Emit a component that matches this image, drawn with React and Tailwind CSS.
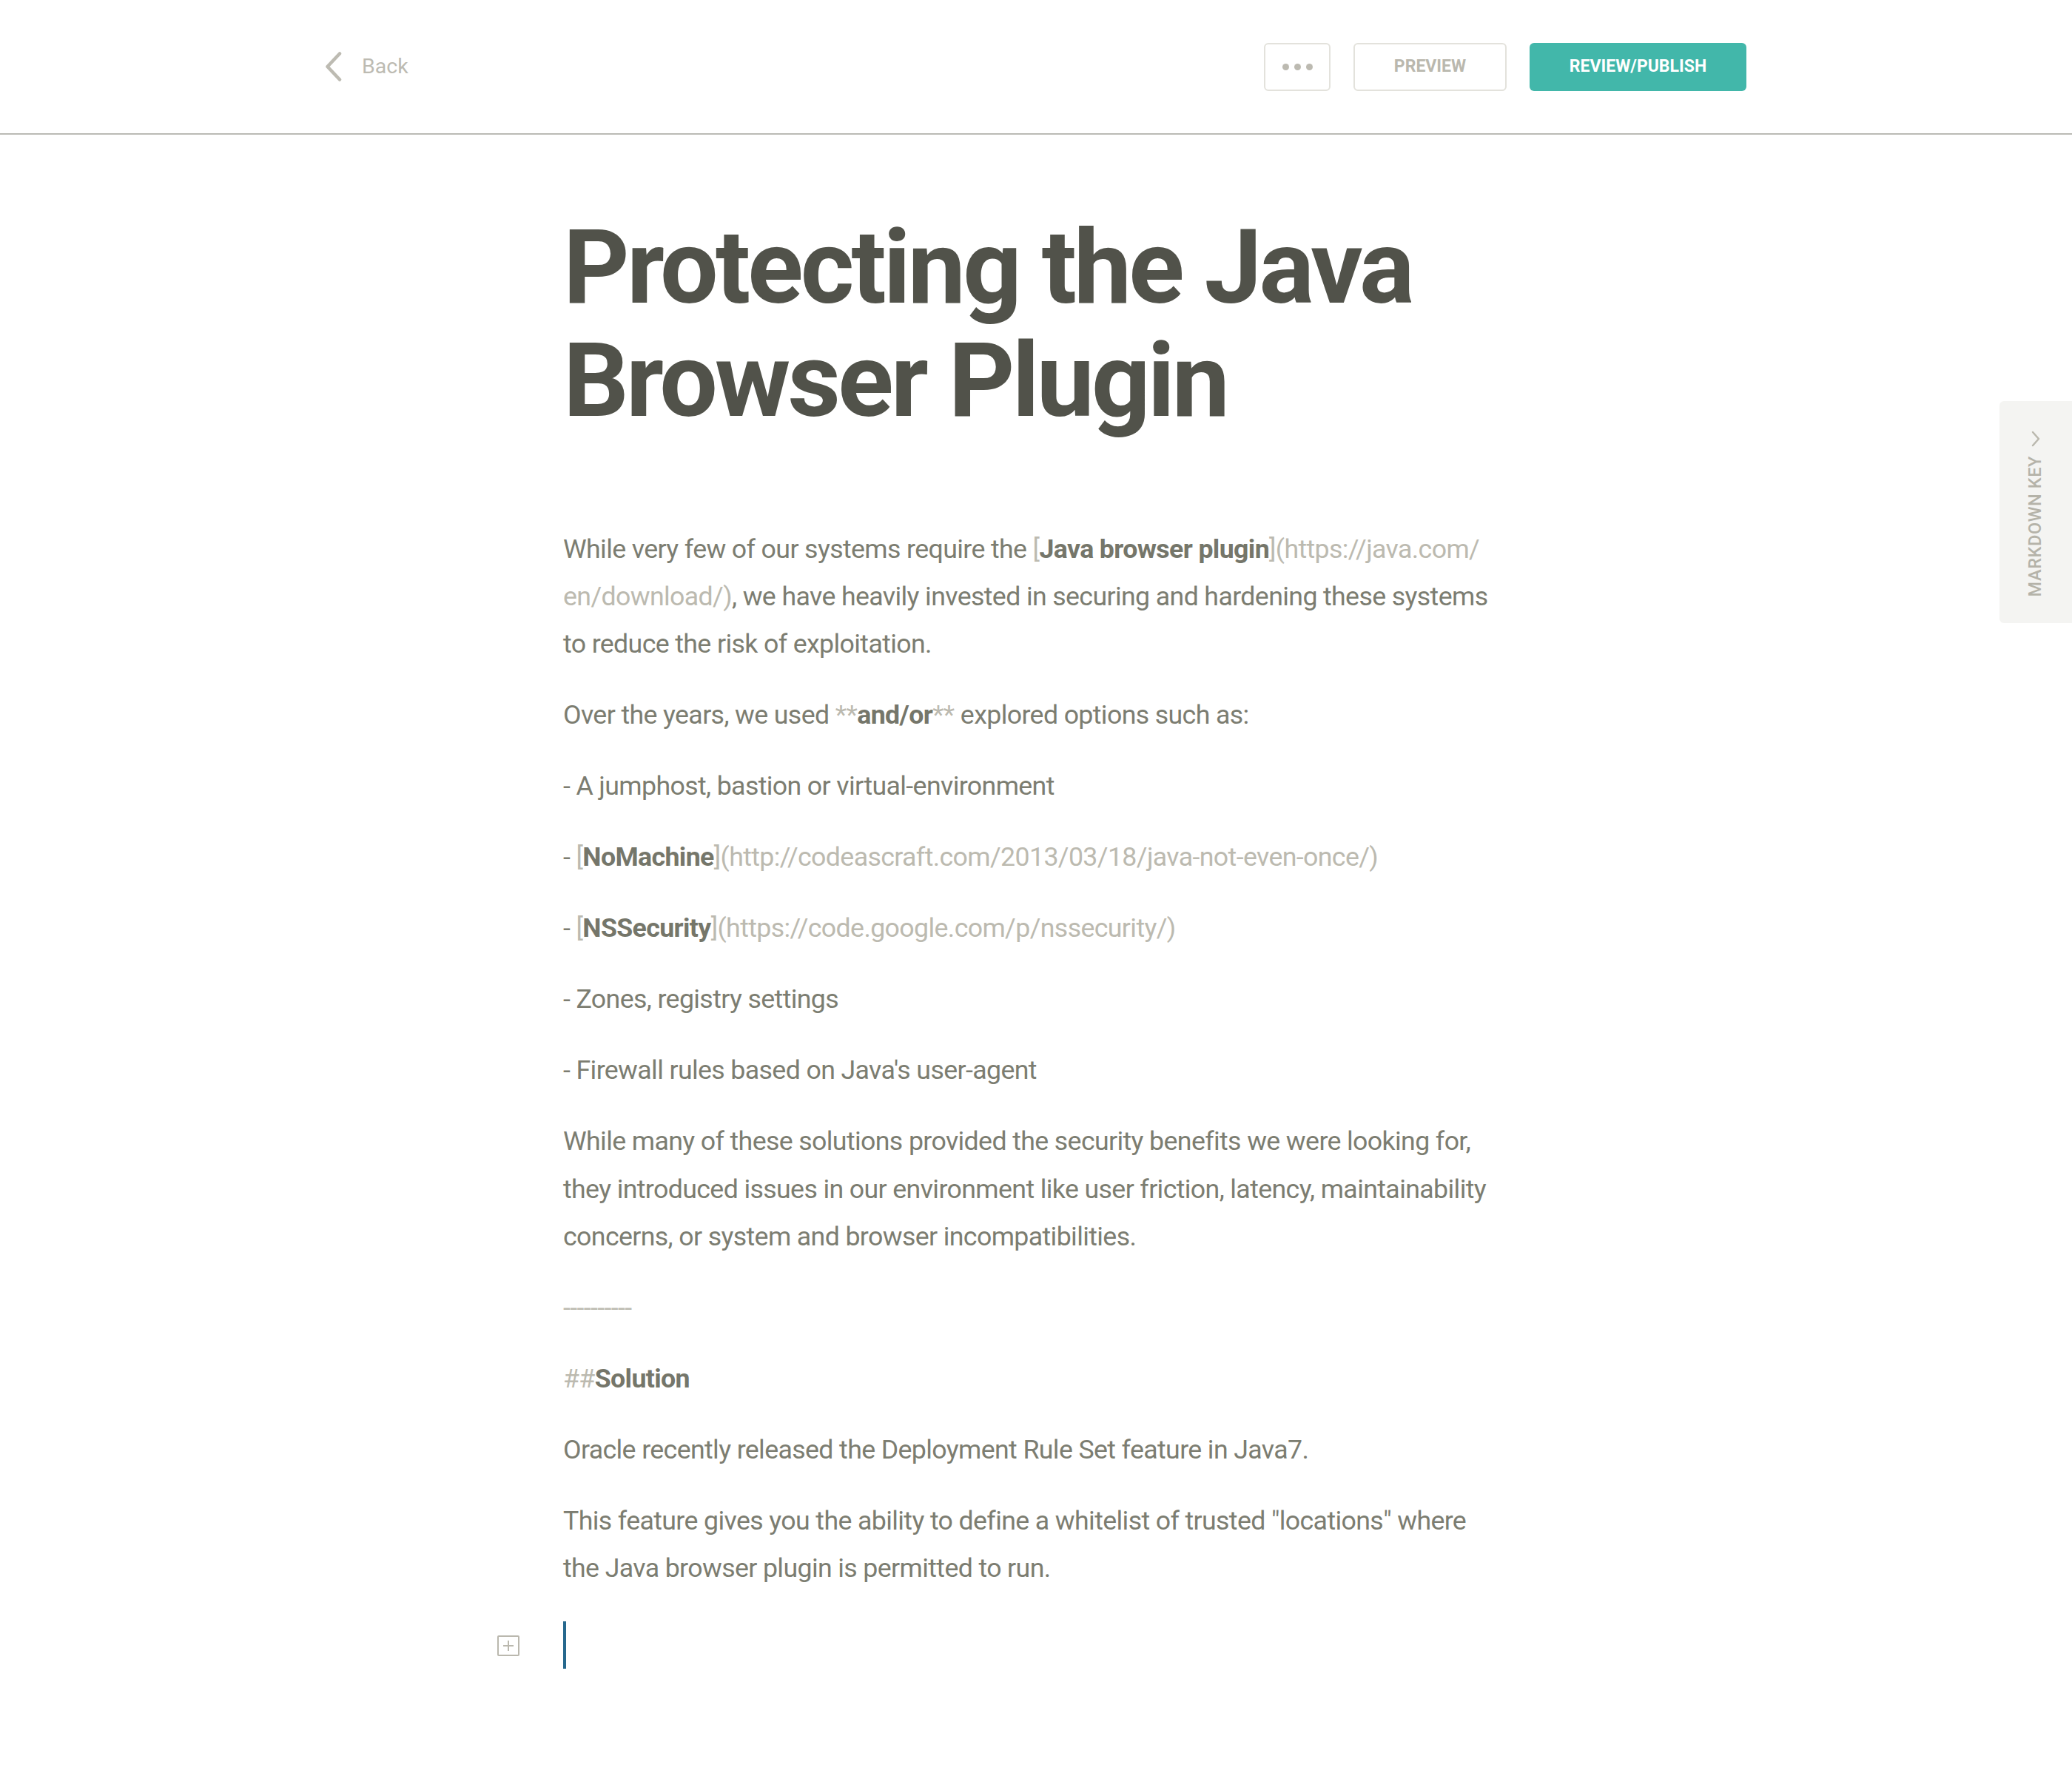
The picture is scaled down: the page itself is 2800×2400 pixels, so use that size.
function Md({ children }) {
  return <span className="text-[#bcbab0]">{children}</span>;
}

function B({ children }) {
  return <strong className="font-bold text-[#75766a]">{children}</strong>;
}

function Header() {
  return (
    <header className="h-[182px] border-b-2 border-[#bbbbb5]">
      <div className="mx-auto flex h-full w-[1920px] items-center justify-between">
        <button className="flex items-center gap-[27px] text-[#bdbbb2]">
          <svg width="22" height="40" viewBox="0 0 22 40" fill="none">
            <path
              d="M19 2.5 L2.5 20 L19 37.5"
              stroke="#bdbbb2"
              strokeWidth="4.5"
              strokeLinecap="round"
              strokeLinejoin="round"
            />
          </svg>
          <span className="text-[28.5px] leading-none">Back</span>
        </button>

        <div className="flex items-center gap-[31px] text-[23px] font-bold">
          <button className="flex h-[65px] w-[90px] items-center justify-center gap-[7px] rounded-[6px] border-2 border-[#e3e2dc]">
            <span className="h-[9px] w-[9px] rounded-full bg-[#bcbab1]" />
            <span className="h-[9px] w-[9px] rounded-full bg-[#bcbab1]" />
            <span className="h-[9px] w-[9px] rounded-full bg-[#bcbab1]" />
          </button>
          <button className="h-[65px] w-[207px] rounded-[6px] border-2 border-[#e3e2dc] text-[#bab8ae]">
            PREVIEW
          </button>
          <button className="h-[65px] w-[293px] rounded-[6px] bg-[#42b7aa] text-white">
            REVIEW/PUBLISH
          </button>
        </div>
      </div>
    </header>
  );
}

function MarkdownKey() {
  return (
    <div className="absolute right-0 top-[542px] flex h-[300px] w-[98px] flex-col items-center rounded-l-[6px] bg-[#f4f4f2] pt-[40px]">
      <svg width="14" height="22" viewBox="0 0 14 22" fill="none">
        <path
          d="M3 2 L11 11 L3 20"
          stroke="#bab8ae"
          strokeWidth="2.5"
          strokeLinecap="round"
          strokeLinejoin="round"
        />
      </svg>
      <span className="mt-[12px] rotate-180 text-[23.5px] font-medium leading-none tracking-[0.6px] text-[#b5b3a9] [writing-mode:vertical-rl]">
        MARKDOWN KEY
      </span>
    </div>
  );
}

export default function App() {
  return (
    <div className="relative min-h-[2400px] bg-white font-[Roboto,sans-serif]">
      <Header />
      <MarkdownKey />

      <main className="mx-auto w-[1278px] pt-[103px] pb-[120px]">
        <h1 className="mb-[118px] text-[139.3px] font-bold leading-[153.4px] tracking-[-3.8px] text-[#51524a]">
          Protecting the Java Browser Plugin
        </h1>

        <div className="pr-[16px] text-[35.7px] leading-[64.3px] tracking-[-0.62px] text-[#7c7d71]">
          <p className="mb-[31.7px]">
            While very few of our systems require the <Md>[</Md>
            <B>Java browser plugin</B>
            <Md>
              ](https://java.com/
              <wbr />
              en/download/)
            </Md>
            , we have heavily invested in securing and hardening these systems to
            reduce the risk of exploitation.
          </p>
          <p className="mb-[31.7px]">
            Over the years, we used <Md>**</Md>
            <B>and/or</B>
            <Md>**</Md> explored options such as:
          </p>
          <p className="mb-[31.7px]">- A jumphost, bastion or virtual-environment</p>
          <p className="mb-[31.7px]">
            - <Md>[</Md>
            <B>NoMachine</B>
            <Md>](http://codeascraft.com/2013/03/18/java-not-even-once/)</Md>
          </p>
          <p className="mb-[31.7px]">
            - <Md>[</Md>
            <B>NSSecurity</B>
            <Md>](https://code.google.com/p/nssecurity/)</Md>
          </p>
          <p className="mb-[31.7px]">- Zones, registry settings</p>
          <p className="mb-[31.7px]">- Firewall rules based on Java's user-agent</p>
          <p className="mb-[31.7px]">
            While many of these solutions provided the security benefits we were
            looking for, they introduced issues in our environment like user
            friction, latency, maintainability concerns, or system and browser
            incompatibilities.
          </p>
          <p className="mb-[31.7px]">
            <Md>----------</Md>
          </p>
          <p className="mb-[31.7px]">
            <Md>##</Md>
            <B>Solution</B>
          </p>
          <p className="mb-[31.7px]">
            Oracle recently released the Deployment Rule Set feature in Java7.
          </p>
          <p className="mb-[31.7px]">
            This feature gives you the ability to define a whitelist of trusted
            "locations" where the Java browser plugin is permitted to run.
          </p>

          <div className="relative h-[64.3px]">
            <span className="absolute left-[-89px] top-[27px] flex h-[28px] w-[30px] items-center justify-center rounded-[2px] border-2 border-[#bab8ae]">
              <svg width="18" height="18" viewBox="0 0 18 18" fill="none">
                <path d="M9 2 V16 M2 9 H16" stroke="#bab8ae" strokeWidth="2" />
              </svg>
            </span>
            <span className="block h-[64px] w-[4px] translate-y-[8px] bg-[#26688d]" />
          </div>
        </div>
      </main>
    </div>
  );
}
